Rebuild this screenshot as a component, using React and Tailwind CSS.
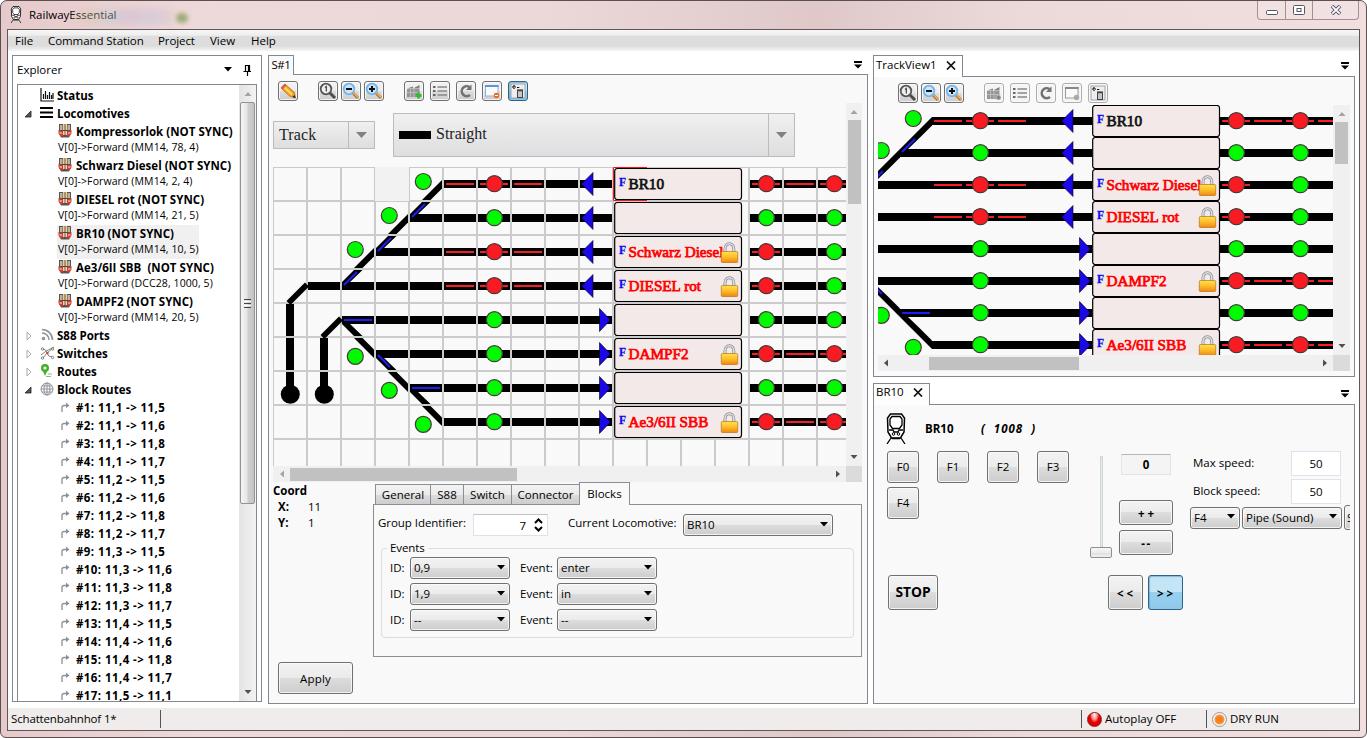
import React from "react";

const BTN =
  "flex shrink-0 items-center justify-center rounded-[3px] border border-[#707070] bg-[linear-gradient(#f3f3f3,#ebebeb_50%,#dddddd_50%,#cdcdcd)] shadow-[inset_0_0_0_1px_#fbfbfbcc]";
const BTN_OFF =
  "flex shrink-0 items-center justify-center rounded-[3px] border border-[#adadad] bg-[#f4f4f4] shadow-[inset_0_0_0_1px_#fbfbfbcc]";
const BTN_ON =
  "flex shrink-0 items-center justify-center rounded-[3px] border border-[#2c628b] bg-[linear-gradient(#c4e5f6,#c4e5f6_50%,#98d1ef_50%,#8fc8ea)] shadow-[inset_1px_1px_1px_#5b8fb088]";

/* ---------- track diagram ---------- */

const LEFT = [
  { 4: "curveUp", 5: "r", 6: "R", 7: "r", 8: "s", 9: "tl" },
  { 3: "curveUp", 4: "swUp", 5: "s", 6: "G", 7: "s", 8: "s", 9: "tl" },
  { 2: "curveUp", 3: "swUp", 4: "s", 5: "r", 6: "R", 7: "r", 8: "s", 9: "tl" },
  { 0: "bend", 1: "s", 2: "swUp", 3: "s", 4: "s", 5: "r", 6: "R", 7: "r", 8: "s", 9: "tl" },
  { 0: "v", 1: "bend", 2: "swDownS", 3: "s", 4: "s", 5: "s", 6: "G", 7: "s", 8: "s", 9: "tr" },
  { 0: "v", 1: "v", 2: "curveDown", 3: "swDownD", 4: "s", 5: "s", 6: "G", 7: "s", 8: "s", 9: "tr" },
  { 0: "end", 1: "end", 3: "curveDown", 4: "swDownS", 5: "s", 6: "G", 7: "s", 8: "s", 9: "tr" },
  { 4: "curveDown", 5: "s", 6: "G", 7: "s", 8: "s", 9: "tr" },
];
const RIGHT = [
  ["R", "r", "R", "r"],
  ["G", "s", "G", "s"],
  ["R", "s", "G", "s"],
  ["R", "s", "G", "s"],
  ["G", "s", "G", "s"],
  ["R", "r", "R", "r"],
  ["G", "s", "G", "s"],
  ["R", "r", "R", "r"],
];
const BLOCKS = [
  { name: "BR10" },
  {},
  { name: "Schwarz Diesel", locked: true },
  { name: "DIESEL rot", locked: true },
  {},
  { name: "DAMPF2", locked: true },
  {},
  { name: "Ae3/6II SBB", locked: true },
];

const Bar = () => <rect x="0" y="12" width="32" height="8" fill="#000" />;
const RedLine = () => <rect x="2" y="15" width="28" height="2" fill="#f81c24" />;
const Lamp = ({ x = 16.4, y = 15.7, color }) => (
  <circle cx={x} cy={y} r="8" fill={color} stroke="#463838" strokeWidth="1.2" />
);
const Diag = ({ d, w = 6.4 }) => <path d={d} stroke="#000" strokeWidth={w} fill="none" />;
const Blue = ({ d }) => <path d={d} stroke="#1d1dfa" strokeWidth="2" fill="none" />;

function Cell({ kind }) {
  switch (kind) {
    case "s":
      return <Bar />;
    case "r":
      return <><Bar /><RedLine /></>;
    case "R":
      return <><Bar /><RedLine /><Lamp color="#fa1a22" /></>;
    case "G":
      return <><Bar /><Lamp color="#00fa00" /></>;
    case "tl":
      return <><Bar /><path d="M1.5 16 13 4.5V27.5Z" fill="#1a08e6" stroke="#000" strokeWidth=".6" /></>;
    case "tr":
      return <><Bar /><path d="M30.5 16 19.5 4.5V27.5Z" fill="#1a08e6" stroke="#000" strokeWidth=".6" /></>;
    case "curveUp":
      return <><path d="M32 12V20.500L20.500 32H12Z" /><Lamp x={13.3} y={13.5} color="#00fa00" /></>;
    case "curveDown":
      return <><path d="M32 20V11.500L20.500 0H12Z" /><Lamp x={13.3} y={18.3} color="#00fa00" /></>;
    case "swUp":
      return <><path d="M3 12H32V20H0V12L12 0H20.500L8 12Z" /><Blue d="M2 15 15 2" /></>;
    case "swDownS":
      return <><Bar /><path d="M0 12V20L12 32H20.500L7 19Z" /><Blue d="M2 16H30" /></>;
    case "swDownD":
      return <><Bar /><path d="M0 12V20L12 32H20.500L7 19Z" /><Blue d="M2 17 14 29" /></>;
    case "bend":
      return <Diag d="M33 14.5 14.5 33" w={5.6} />;
    case "v":
      return <rect x="12" width="8" height="32" />;
    case "end":
      return <><rect x="12" width="8" height="22" /><circle cx="16.3" cy="22.3" r="9.5" /></>;
    default:
      return null;
  }
}

function Lock() {
  return (
    <g transform="translate(106.5 6)">
      <path d="M4.5 11V7a4.4 5.2 0 0 1 8.8 0V11" fill="none" stroke="#8b8f96" strokeWidth="3" />
      <path d="M4.5 11V7a4.4 5.2 0 0 1 8.8 0V11" fill="none" stroke="#dfe1e6" strokeWidth="1.5" />
      <rect x=".8" y="9.5" width="16.4" height="11" rx="1" fill="url(#lockGold)" stroke="#b4731a" strokeWidth=".7" />
    </g>
  );
}

function Block({ name, locked }) {
  return (
    <g>
      <rect x=".7" y=".5" width="126.8" height="31" rx="2.5" fill="#f3e9e8" stroke="#000" strokeWidth="1.2" />
      {name && (
        <>
          <text x="5" y="17.5" fontFamily="Liberation Serif, serif" fontWeight="700" fontSize="11.5" fill="#0a0af0" stroke="#0a0af0" strokeWidth=".3">F</text>
          <text
            x="14.6"
            y="20.8"
            fontFamily="Liberation Serif, serif"
            fontSize="15.2"
            fill={locked ? "#f00" : "#111"}
            stroke={locked ? "#f00" : "#111"}
            strokeWidth=".75"
          >
            {name}
          </text>
        </>
      )}
      {locked && <Lock />}
    </g>
  );
}

function Tracks({ width, height, pitch, ox, oy, grid }) {
  const pad = (pitch - 32) / 2;
  const at = (c, r) => `translate(${ox + c * pitch + pad} ${oy + r * pitch + pad})`;
  return (
    <svg width={width} height={height} className="block shrink-0">
      <defs>
        <linearGradient id="lockGold" x1="0" y1="0" x2="0" y2="1">
          <stop offset="0" stopColor="#ffe04a" />
          <stop offset=".45" stopColor="#ffc22e" />
          <stop offset="1" stopColor="#f0860c" />
        </linearGradient>
      </defs>
      {grid && (
        <g stroke="#cbcbcb" strokeWidth="2">
          {Array.from({ length: 17 }, (_, i) => (
            <path key={"v" + i} d={`M${i * pitch} 0V${height}`} />
          ))}
          {Array.from({ length: 9 }, (_, i) => (
            <path key={"h" + i} d={`M0 ${i * pitch}H${width}`} />
          ))}
          <rect x={3 * pitch} y="0" width={pitch} height={pitch} fill="#f2f2f2" stroke="none" />
        </g>
      )}
      {LEFT.map((row, r) =>
        Object.entries(row).map(([c, kind]) => (
          <g key={r + "-" + c} transform={at(Number(c), r)}>
            <Cell kind={kind} />
          </g>
        ))
      )}
      {RIGHT.map((row, r) =>
        row.map((kind, i) => (
          <g key={r + "+" + i} transform={at(14 + i, r)}>
            <Cell kind={kind} />
          </g>
        ))
      )}
      {BLOCKS.map((b, r) => (
        <g key={r} transform={at(10, r)}>
          <Block {...b} />
        </g>
      ))}
      {grid && <path d={`M${11 * pitch} .5H${10 * pitch + 0.5}V${pitch - 0.5}H${11 * pitch}`} fill="none" stroke="#f01818" />}
    </svg>
  );
}

/* ---------- icons ---------- */

const Pencil = () => (
  <svg width="18" height="18" viewBox="0 0 18 18">
    <path d="M2 6 6 2l9 8 1.500 6-6-2Z" fill="#f6a21c" stroke="#a86208" strokeWidth=".7" />
    <path d="M4 4 13 12.500" stroke="#ffdf6a" strokeWidth="1.800" />
    <path d="M1.800 5.600 5.600 1.800 7.400 3.500 3.600 7.400Z" fill="#e4574a" />
    <path d="M13.500 15 16.500 16 15.600 13Z" fill="#222" />
  </svg>
);
const Lens = ({ mode }) => (
  <svg width="18" height="18" viewBox="0 0 18 18">
    <path d="M10.500 10.500 16 16" stroke={mode === "1" ? "#4c4c4c" : "#b57428"} strokeWidth="3" />
    {mode !== "1" && <path d="M11 10.300 16 15.300" stroke="#f3bd62" strokeWidth="1.200" />}
    <circle cx="7" cy="7" r="5.300" fill={mode === "1" ? "#eee" : "#cbe6fb"} stroke={mode === "1" ? "#555" : "#77b3e6"} strokeWidth="1.800" />
    {mode === "1" && <path d="M6 5.500 7.300 4.500V9.500" stroke="#444" strokeWidth="1.200" fill="none" />}
    {mode !== "1" && <path d="M4 7H10" stroke="#111" strokeWidth="2" />}
    {mode === "+" && <path d="M7 4V10" stroke="#111" strokeWidth="2" />}
  </svg>
);
const Clapper = ({ off }) => (
  <svg width="18" height="18" viewBox="0 0 18 18">
    <path d="M2 7H14.500V15H2Z" fill="#969696" />
    <path d="M2 6.500 8 4.500V6.500L14.500 3V6.500H2Z" fill="#808080" />
    <path d="M5.500 7V15M9 7V15M2 10.500H13" stroke="#c4c4c4" strokeWidth=".8" />
    {off ? <circle cx="13.500" cy="13.500" r="2.500" fill="#888" stroke="#ddd" strokeWidth=".6" /> : <path d="M10.500 13.500H16.500M13.500 10.500V16.500" stroke="#3ab83c" strokeWidth="2.800" />}
  </svg>
);
const ListIcon = () => (
  <svg width="18" height="18" viewBox="0 0 18 18">
    <path d="M2 5H4.500M2 9H4.500M2 13H4.500" stroke="#666" strokeWidth="2.200" />
    <path d="M6.500 5H16M6.500 9H16M6.500 13H16" stroke="#888" strokeWidth="1.700" />
  </svg>
);
const Reload = () => (
  <svg width="18" height="18" viewBox="0 0 18 18">
    <path d="M13 13A5 5 0 1 1 12.500 5" fill="none" stroke="#737373" strokeWidth="2.600" />
    <path d="M9 8H14.500V2.500Z" fill="#737373" />
  </svg>
);
const Win = ({ off }) => (
  <svg width="18" height="18" viewBox="0 0 18 18">
    <rect x="2.500" y="3.500" width="12.500" height="10.500" fill="#fafafa" stroke={off ? "#999" : "#8eb0e0"} />
    <path d="M2 4H15.500" stroke={off ? "#888" : "#5c93da"} strokeWidth="2" />
    <circle cx="13.500" cy="13.500" r="2.700" fill={off ? "#aaa" : "#f06a1c"} />
    {!off && <path d="M12 13.500H15" stroke="#fff" />}
  </svg>
);
const Sticky = () => (
  <svg width="18" height="18" viewBox="0 0 18 18">
    <rect x="2" y="2" width="14" height="14" fill="#eee" stroke="#888" strokeWidth=".7" />
    <path d="M3 5H7M5 3V7M8 5.500H11" stroke="#111" strokeDasharray="2 .7" strokeWidth="1.200" />
    <rect x="8.500" y="8" width="5" height="7.500" fill="#c6c6c6" stroke="#444" />
    <path d="M8 8.500H14" stroke="#444" strokeWidth="1.500" />
  </svg>
);
const Train = ({ w, h }) => (
  <svg width={w} height={h} viewBox="0 0 20 31" fill="none" stroke="#000">
    <path d="M4.500 1H15.500L18.500 5 18 19 14.500 25H5.500L2 19 1.500 5Z" strokeWidth="1.500" fill="#fff" />
    <path d="M6 3.500H14L16 6V12L13.500 15.500H6.500L4 12V6Z" strokeWidth="1.300" />
    <path d="M3 17H7L8 19H12L13 17H17M5 25 1 31M15 25 19 31M6 25.500H14" strokeWidth="1.300" />
    <circle cx="7.500" cy="21" r="1.300" />
    <circle cx="12.500" cy="21" r="1.300" />
  </svg>
);
const LocoIcon = () => (
  <svg width="14" height="14" viewBox="0 0 14 14" className="block shrink-0">
    <path d="M1 0H13V10L11 13.500H3L1 10Z" fill="#5a5452" />
    <path d="M2 1H4.500V6H2ZM9.500 1H12V6H9.500Z" fill="#b9b1a6" />
    <path d="M5 0H9V6H5Z" fill="#eecb8e" />
    <path d="M.500 6 5 8V12L2.500 12 .500 9.500ZM13.500 6 9 8V12L11.500 12 13.500 9.500Z" fill="#dc3a2c" />
    <path d="M5 7H9V11H5Z" fill="#f0d8b4" />
    <path d="M7 0V12M5 6.500H9" stroke="#5b3b2c" strokeWidth=".8" />
    <path d="M1.500 9H4M10 9H12.500" stroke="#ffe9e0" strokeWidth="1" />
  </svg>
);
const Turn = () => (
  <svg width="11" height="12" viewBox="0 0 11 12" className="shrink-0" fill="none" stroke="#8b9099" strokeWidth="1.300">
    <path d="M2 11V6.500Q2 4.500 4 4.500H8" />
    <path d="M6 1.500 9.500 4.500 6 7Z" fill="#8b9099" stroke="none" />
  </svg>
);
const GroupIcons = {
  status: (
    <svg width="14" height="14" viewBox="0 0 14 14"><path d="M1 0V13H14M3.500 6V11M5.500 3V11M7.500 7V11M9.500 4V11M11.500 7V11M13 5V11" stroke="#111" strokeWidth="1.200" fill="none" /></svg>
  ),
  list: (
    <svg width="14" height="14" viewBox="0 0 14 14"><path d="M0 2H13M0 6.500H13M0 11H13" stroke="#000" strokeWidth="2" /></svg>
  ),
  feed: (
    <svg width="14" height="14" viewBox="0 0 14 14" fill="none" stroke="#8e929b" strokeWidth="1.600"><path d="M2 1.500A10.500 10.500 0 0 1 12.500 12M2 5A7 7 0 0 1 9 12" /><circle cx="3.500" cy="10.500" r="1" /></svg>
  ),
  net: (
    <svg width="15" height="14" viewBox="0 0 15 14" fill="none" stroke="#777" strokeWidth=".9"><path d="M3 12 7 7 12 3M3 3Q6 3 7 7T12 11M1 9Q5 5 14 1" /><circle cx="2.500" cy="3" r="1.200" /><circle cx="12.500" cy="3" r="1.200" /><circle cx="12.500" cy="11.500" r="1.200" /><circle cx="2.500" cy="12" r="1.200" /><circle cx="7.500" cy="7" r="1.200" fill="#c44" stroke="none" /></svg>
  ),
  pin: (
    <svg width="14" height="14" viewBox="0 0 14 14"><circle cx="5" cy="4" r="2.800" fill="none" stroke="#43b02a" strokeWidth="2.400" /><path d="M2.500 6 5 12 7.500 6Z" fill="#43b02a" /><path d="M6 12.500H11M8 10H12" stroke="#8fb98a" strokeWidth="1.200" /></svg>
  ),
  globe: (
    <svg width="14" height="14" viewBox="0 0 14 14" fill="none" stroke="#8e929b" strokeWidth="1"><circle cx="7" cy="7" r="6" /><ellipse cx="7" cy="7" rx="3" ry="6" /><path d="M1 7H13M7 1V13M2 4H12M2 10H12" /></svg>
  ),
};

/* ---------- small controls ---------- */

const ToolBtn = ({ children, on, off, ml }) => (
  <span className={(on ? BTN_ON : off ? BTN_OFF : BTN) + " h-5 w-5 " + (ml || "")}>{children}</span>
);

const Caret = () => (
  <svg width="8" height="5" className="shrink-0"><path d="M0 0H8L4 4.500Z" fill="#000" /></svg>
);

const Select = ({ children, className }) => (
  <div className={BTN + " justify-between! pr-1 pl-[3px] " + className}>
    <span className="whitespace-nowrap">{children}</span>
    <span className="-mt-[2px] flex"><Caret /></span>
  </div>
);

const MenuMark = () => (
  <svg width="9" height="9" className="shrink-0"><path d="M0 2H8" stroke="#000" strokeWidth="2" /><path d="M0 4.500H8L4 8.500Z" /></svg>
);
const Cross = () => (
  <svg width="10" height="9" className="shrink-0"><path d="M1 .5 9 8.500M9 .5 1 8.500" stroke="#111" strokeWidth="1.700" /></svg>
);

const Arrow = ({ d, light }) => (
  <svg width="8" height="8" className="shrink-0"><path d={d} fill={light ? "#a3a3a3" : "#505050"} /></svg>
);
const UP = "M.5 6 4 2 7.500 6Z";
const DOWN = "M.5 2 4 6 7.500 2Z";
const LEFTA = "M6 .5 2 4 6 7.500Z";
const RIGHTA = "M2 .5 6 4 2 7.500Z";

/* ---------- explorer ---------- */

const LOCOS = [
  ["Kompressorlok (NOT SYNC)", "V[0]->Forward (MM14, 78, 4)"],
  ["Schwarz Diesel (NOT SYNC)", "V[0]->Forward (MM14, 2, 4)"],
  ["DIESEL rot (NOT SYNC)", "V[0]->Forward (MM14, 21, 5)"],
  ["BR10 (NOT SYNC)", "V[0]->Forward (MM14, 10, 5)"],
  ["Ae3/6II SBB  (NOT SYNC)", "V[0]->Forward (DCC28, 1000, 5)"],
  ["DAMPF2 (NOT SYNC)", "V[0]->Forward (MM14, 20, 5)"],
];
const ROUTES = [
  "11,1 -> 11,5", "11,1 -> 11,6", "11,1 -> 11,8", "11,1 -> 11,7", "11,2 -> 11,5", "11,2 -> 11,6",
  "11,2 -> 11,8", "11,2 -> 11,7", "11,3 -> 11,5", "11,3 -> 11,6", "11,3 -> 11,8", "11,3 -> 11,7",
  "11,4 -> 11,5", "11,4 -> 11,6", "11,4 -> 11,8", "11,4 -> 11,7", "11,5 -> 11,1",
];

const Group = ({ icon, label, state }) => (
  <div className="flex h-[18px] items-center pl-[6px] font-bold">
    <span className="flex w-[16px] shrink-0">
      {state === "open" && <svg width="8" height="8"><path d="M7 1V7H1Z" fill="#555" stroke="#222" strokeWidth=".8" /></svg>}
      {state === "closed" && <svg width="8" height="10" className="ml-px"><path d="M2 1 6 5 2 9Z" fill="#fff" stroke="#aaa" /></svg>}
    </span>
    <span className="flex w-[17px] shrink-0 pb-[2px]">{GroupIcons[icon]}</span>
    {label}
  </div>
);

function Explorer() {
  return (
    <section className="flex w-[250px] shrink-0 flex-col border border-[#828790] bg-white">
      <header className="flex h-7 shrink-0 items-center pr-[10px] pb-px pl-1">
        <span className="flex-1">Explorer</span>
        <Caret />
        <svg width="8" height="12" className="ml-[11px]"><path d="M2.500 7V1.500H6.500V7M.5 7.500H8M4.500 7.500V12M5.500 1V7" stroke="#000" strokeWidth="1.200" fill="none" /></svg>
      </header>
      <div className="mx-1 flex min-h-0 flex-1 border border-b-0 border-[#828790]">
        <div className="min-w-0 flex-1 overflow-hidden pt-[2px]">
          <Group icon="status" label="Status" />
          <Group icon="list" label="Locomotives" state="open" />
          {LOCOS.map(([name, sub], i) => (
            <div key={name} className="flex h-[34px] pl-[39px]">
              <div className={i === 3 ? "bg-[#f0f0f0] pl-px" : "pl-px"}>
                <div className="flex h-[18px] items-center font-bold tracking-[0.03px] whitespace-pre">
                  <span className="w-[18px] shrink-0 pb-[3px]"><LocoIcon /></span>
                  {name}
                </div>
                <div className="h-4 text-[10.5px] leading-[12px] tracking-[0.1px] whitespace-nowrap">{sub}</div>
              </div>
            </div>
          ))}
          <Group icon="feed" label="S88 Ports" state="closed" />
          <Group icon="net" label="Switches" state="closed" />
          <Group icon="pin" label="Routes" state="closed" />
          <Group icon="globe" label="Block Routes" state="open" />
          {ROUTES.map((r, i) => (
            <div key={i} className="flex h-[18px] items-center pl-[42px] font-bold tracking-[0.42px] whitespace-nowrap">
              <span className="w-4 shrink-0 pb-[2px]"><Turn /></span>
              {`#${i + 1}: ${r}`}
            </div>
          ))}
        </div>
        <div className="flex w-[17px] shrink-0 flex-col items-center bg-[linear-gradient(90deg,#e3e3e3,#f3f3f3)]">
          <div className="flex h-[17px] items-center"><Arrow d={UP} light /></div>
          <div className="flex h-[402px] w-[15px] flex-col items-center justify-center gap-px rounded-[2px] border border-[#929292] bg-[linear-gradient(90deg,#f4f4f4,#e6e6e6_45%,#cfcfd0_55%,#c4c4c6)]">
            <i className="h-px w-[7px] bg-[#444]" />
            <i className="h-px w-[7px] bg-white" />
            <i className="h-px w-[7px] bg-[#444]" />
            <i className="h-px w-[7px] bg-white" />
            <i className="h-px w-[7px] bg-[#444]" />
          </div>
          <div className="flex flex-1 items-end pb-[5px]"><Arrow d={DOWN} /></div>
        </div>
      </div>
    </section>
  );
}

/* ---------- editor ---------- */

const TabLabel = ({ children, className }) => (
  <div className={"flex items-center justify-center border border-b-0 border-[#8c8e94] bg-[linear-gradient(#f3f3f3,#ebebeb_50%,#dddddd_50%,#cdcdcd)] " + className}>
    {children}
  </div>
);

const EventRow = ({ id, event }) => (
  <div className="flex h-[26px] items-center">
    <span className="w-5">ID:</span>
    <Select className="h-[22px] w-[100px]">{id}</Select>
    <span className="ml-[10px] w-[37px]">Event:</span>
    <Select className="h-[22px] w-[100px]">{event}</Select>
  </div>
);

const BigCaret = () => (
  <svg width="11" height="6"><path d="M0 0H11L5.500 6Z" fill="#808080" /></svg>
);

function Editor() {
  return (
    <section className="flex w-[600px] shrink-0 flex-col">
      <header className="flex h-[19px] shrink-0 items-center">
        <div className="z-10 flex h-5 w-[26px] items-center justify-center self-start border border-b-0 border-[#828790] bg-[#f9f9f9] pb-[2px] tracking-[-0.4px]">S#1</div>
        <span className="flex-1" />
        <span className="mr-[5px]"><MenuMark /></span>
      </header>
      <div className="flex min-h-0 flex-1 flex-col border border-[#828790] bg-[#f9f9f9] pl-1">
        <div className="flex h-[28px] shrink-0 items-start pt-[6px] pl-[5px]">
          <ToolBtn><Pencil /></ToolBtn>
          <ToolBtn ml="ml-5"><Lens mode="1" /></ToolBtn>
          <ToolBtn ml="ml-[3px]"><Lens mode="-" /></ToolBtn>
          <ToolBtn ml="ml-[3px]"><Lens mode="+" /></ToolBtn>
          <ToolBtn ml="ml-5"><Clapper /></ToolBtn>
          <ToolBtn ml="ml-[6px]"><ListIcon /></ToolBtn>
          <ToolBtn ml="ml-[6px]"><Reload /></ToolBtn>
          <ToolBtn ml="ml-[6px]"><Win /></ToolBtn>
          <ToolBtn ml="ml-[6px]" on><Sticky /></ToolBtn>
        </div>
        <div className="flex h-[363px] shrink-0">
          <div className="w-[573px]">
            <div className="flex h-16 items-start pt-[10px] font-['Liberation_Serif',serif] text-[16px] text-[#222]">
              <div className="mt-2 flex h-7 w-[102px] border border-[#bcbcbc] bg-[linear-gradient(#f0f0f0,#dedee0)]">
                <span className="flex flex-1 items-center pl-[5px] tracking-[0.1px]">Track</span>
                <span className="flex w-[26px] items-center justify-center border-l border-[#bcbcbc]"><BigCaret /></span>
              </div>
              <div className="ml-[18px] flex h-11 w-[402px] border border-[#bcbcbc] bg-[linear-gradient(#f0f0f0,#dedee0)]">
                <span className="flex flex-1 items-center gap-[5px] pb-[2px] pl-[5px]">
                  <i className="mt-[2px] h-2 w-8 bg-black" />
                  Straight
                </span>
                <span className="flex w-[26px] items-center justify-center border-l border-[#bcbcbc]"><BigCaret /></span>
              </div>
            </div>
            <Tracks width={573} height={299} pitch={34} ox={0} oy={0} grid />
          </div>
          <div className="flex w-4 flex-col items-center bg-[#f0f0f0]">
            <span className="flex h-[17px] items-center"><Arrow d={UP} light /></span>
            <i className="h-[84px] w-[13px] bg-[#c1c1c1]" />
            <span className="flex flex-1 items-end pb-[5px]"><Arrow d={DOWN} /></span>
          </div>
        </div>
        <div className="flex h-4 w-[589px] shrink-0 items-center bg-[#f0f0f0]">
          <span className="flex w-[17px] justify-center"><Arrow d={LEFTA} light /></span>
          <i className="h-[13px] w-[227px] bg-[#c1c1c1]" />
          <span className="flex flex-1 justify-end pr-1"><Arrow d={RIGHTA} /></span>
          <i className="h-4 w-4 bg-[#dbdbdb]" />
        </div>
        <div className="flex">
          <div className="flex w-[100px] flex-col">
            <div className="mt-[1px] flex h-4 items-center font-bold">Coord</div>
            <div className="flex h-4 items-center pl-[5px]"><b className="w-[30px]">X:</b>11</div>
            <div className="flex h-4 items-center pl-[5px]"><b className="w-[30px]">Y:</b>1</div>
            <div className={BTN + " mt-[131px] ml-[5px] h-8 w-[75px] pt-px tracking-[0.15px]"}>Apply</div>
          </div>
          <div className="flex w-[489px] flex-col">
            <div className="flex h-[22px] items-end pl-[2px]">
              <TabLabel className="h-5 w-[56px]">General</TabLabel>
              <TabLabel className="-ml-px h-5 w-[34px]">S88</TabLabel>
              <TabLabel className="-ml-px h-5 w-[49px]">Switch</TabLabel>
              <TabLabel className="-ml-px h-5 w-[69px]">Connector</TabLabel>
              <div className="z-10 -mb-px -ml-px flex h-[23px] w-[51px] items-center justify-center border border-b-0 border-[#8c8e94] bg-[#f9f9f9]">Blocks</div>
            </div>
            <div className="h-[153px] border border-[#8c8e94] pt-[9px] pl-1">
              <div className="flex h-[22px] items-center">
                <span className="w-[95px] pb-[5px] tracking-[-0.05px] whitespace-nowrap">Group Identifier:</span>
                <div className="flex h-[22px] w-[75px] items-center justify-end border border-[#dfe1e6] border-t-[#c0c4cc] bg-white">
                  <span className="mt-[2px] mr-2">7</span>
                  <svg width="9" height="14" className="mr-1"><path d="M1 5 4.500 1.500 8 5M1 9 4.500 12.500 8 9" fill="none" stroke="#000" strokeWidth="2" /></svg>
                </div>
                <span className="ml-5 w-[115px] pb-[5px] tracking-[-0.05px] whitespace-nowrap">Current Locomotive:</span>
                <Select className="h-[22px] w-[150px]">BR10</Select>
              </div>
              <fieldset className="mt-1 ml-[3px] h-[98px] w-[473px] rounded-[4px] border border-[#d5dfe5] pl-2 [&>legend]:-ml-[3px]">
                <legend className="h-4 px-[3px] leading-4 tracking-[-0.1px]">Events</legend>
                <div className="-mt-px">
                  <EventRow id="0,9" event="enter" />
                  <EventRow id="1,9" event="in" />
                  <EventRow id="--" event="--" />
                </div>
              </fieldset>
            </div>
          </div>
        </div>
      </div>
    </section>
  );
}

/* ---------- right column ---------- */

function TrackView() {
  return (
    <section className="flex h-[322px] shrink-0 flex-col">
      <header className="flex h-[21px] shrink-0 items-center">
        <div className="z-10 flex h-[22px] w-[90px] items-center justify-between self-start border border-b-0 border-[#828790] bg-white pr-[6px] pb-[3px] pl-[2px]">
          TrackView1 <Cross />
        </div>
        <span className="flex-1" />
        <span className="mr-[5px]"><MenuMark /></span>
      </header>
      <div className="min-h-0 flex-1 border border-[#828790] bg-[#f9f9f9] pl-1">
        <div className="flex h-[28px] items-start pt-[6px] pl-5">
          <ToolBtn><Lens mode="1" /></ToolBtn>
          <ToolBtn ml="ml-[3px]"><Lens mode="-" /></ToolBtn>
          <ToolBtn ml="ml-[3px]"><Lens mode="+" /></ToolBtn>
          <ToolBtn ml="ml-5" off><Clapper off /></ToolBtn>
          <ToolBtn ml="ml-[6px]" off><ListIcon /></ToolBtn>
          <ToolBtn ml="ml-[6px]" off><Reload /></ToolBtn>
          <ToolBtn ml="ml-[6px]" off><Win off /></ToolBtn>
          <ToolBtn ml="ml-[6px]" off><Sticky /></ToolBtn>
        </div>
        <div className="flex h-[250px]">
          <Tracks width={455} height={250} pitch={32} ox={-106} oy={0} />
          <div className="flex w-[17px] flex-col items-center bg-[#f0f0f0]">
            <span className="flex h-[17px] items-center"><Arrow d={UP} light /></span>
            <i className="h-[42px] w-[13px] bg-[#c1c1c1]" />
            <span className="flex flex-1 items-end pb-[5px]"><Arrow d={DOWN} /></span>
          </div>
        </div>
        <div className="flex h-4 w-[472px] items-center bg-[#f0f0f0]">
          <span className="flex w-[51px] pl-1"><Arrow d={LEFTA} /></span>
          <i className="h-[13px] w-[150px] bg-[#c1c1c1]" />
          <span className="flex flex-1 justify-end pr-1"><Arrow d={RIGHTA} /></span>
          <i className="h-4 w-[17px] bg-[#dbdbdb]" />
        </div>
      </div>
    </section>
  );
}

const SpeedRow = ({ label }) => (
  <div className="flex h-7 items-start justify-between pl-[3px]">
    <span className="pt-[3px]">{label}</span>
    <span className="flex h-[25px] w-[50px] items-center justify-center border border-[#e2e3ea] bg-white">50</span>
  </div>
);

function LocoControl() {
  return (
    <section className="mt-[6px] flex min-h-0 flex-1 flex-col">
      <header className="flex h-[21px] shrink-0 items-center">
        <div className="z-10 flex h-[22px] w-[57px] items-center justify-between self-start border border-b-0 border-[#828790] bg-[#fdfdfd] pr-[6px] pb-[5px] pl-[2px]">
          BR10 <Cross />
        </div>
        <span className="flex-1" />
        <span className="mr-[5px]"><MenuMark /></span>
      </header>
      <div className="flex min-h-0 flex-1 flex-col overflow-hidden border border-[#828790] bg-[#f9f9f9] pl-[13px]">
        <div className="flex h-[46px] shrink-0 items-start pt-2">
          <div className="-ml-px"><Train w={20} h={31} /></div>
          <b className="mt-[7px] ml-[19px] w-14">BR10</b>
          <b className="mt-[7px] tracking-[1px] whitespace-pre italic">(  1008  )</b>
        </div>
        <div className="flex h-[124px] shrink-0">
          <div className="flex w-[203px] flex-wrap content-start gap-x-[18px] gap-y-1">
            {["F0", "F1", "F2", "F3", "F4"].map((f) => (
              <div key={f} className={BTN + " h-8 w-8"}>{f}</div>
            ))}
          </div>
          <div className="flex w-[22px] flex-col items-center pt-[5px]">
            <i className="h-[91px] w-[3px] border border-[#d0d6d6] bg-[#e7eaea]" />
            <i className="h-[11px] w-[22px] rounded-[2px] border border-[#8e8f8f] bg-[linear-gradient(#f6f6f6,#ececec_50%,#dddddd_50%,#f0f0f0)]" />
          </div>
          <div className="ml-[7px] flex w-[54px] flex-col items-center pt-[3px]">
            <div className="flex h-[21px] w-[50px] items-center justify-center border border-[#e2e3ea] border-t-[#b5b5be] bg-[#f4f4f4] font-bold">0</div>
            <div className={BTN + " mt-[25px] h-[25px] w-[54px] pt-[2px] pl-[3px] font-bold tracking-[3px]"}>++</div>
            <div className={BTN + " mt-[5px] h-[25px] w-[54px] pt-[2px] pl-px font-bold tracking-[1.5px]"}>--</div>
          </div>
          <div className="ml-[17px] w-[160px] overflow-hidden">
            <div className="w-[151px]">
              <SpeedRow label="Max speed:" />
              <SpeedRow label="Block speed:" />
            </div>
            <div className="-mt-[2px] flex w-[170px] items-center gap-[2px]">
              <Select className="h-[22px] w-[50px]">F4</Select>
              <Select className="h-[22px] w-[100px]">Pipe (Sound)</Select>
              <div className={BTN + " h-[25px] w-[40px] justify-start! pl-[2px]"}>S</div>
            </div>
          </div>
        </div>
        <div className="flex h-[35px] shrink-0 pl-px">
          <div className={BTN + " h-[35px] w-[50px] text-[13.8px] font-bold"}>STOP</div>
          <div className={BTN + " ml-[170px] h-[35px] w-[35px] pt-[3px] pl-[2px] font-bold tracking-[3px]"}>&lt;&lt;</div>
          <div className={BTN_ON + " ml-[5px] h-[35px] w-[35px] pt-[3px] pl-[2px] font-bold tracking-[3px]"}>&gt;&gt;</div>
        </div>
      </div>
    </section>
  );
}

/* ---------- window ---------- */

export default function App() {
  return (
    <div className="flex h-[738px] w-[1367px] flex-col overflow-hidden rounded-t-[7px] rounded-b-[6px] border border-[#5a5052] bg-[linear-gradient(90deg,#e6c9cb,#eed9da_15%,#ecd8d9_40%,#e0c8c9_60%,#ecdadb_75%,#f1dfe0)] px-[6px] pb-[6px] font-['Open_Sans','Noto_Sans',sans-serif] text-[11.5px] text-black">
      <div className="flex h-7 shrink-0 items-start pl-[3px]">
        <div className="mt-[5px]"><Train w={12} h={17} /></div>
        <span className="mt-[5px] ml-[7px]">RailwayEssential</span>
        <span className="mt-2 -ml-[50px] h-4 w-[105px] bg-[linear-gradient(90deg,#c7b3ce00,#d9c8a8,#b7cbd8,#c7b3ce,#b9c2de,#d8c0c4)] opacity-40 blur-[3px]" />
        <span className="mt-3 ml-1 h-[10px] w-3 rounded-full bg-[#7f9a50] opacity-70 blur-[2px]" />
        <div className="mr-px ml-auto flex h-[19px] w-[102px] rounded-b-[4px] border border-t-0 border-[#a58f92] bg-[#f2e2e3aa]">
          <span className="flex w-7 items-center justify-center border-r border-[#a58f92]">
            <svg width="12" height="5" className="mt-[5px]"><rect x=".5" y=".5" width="11" height="4" rx="1" fill="#fff" stroke="#556" /></svg>
          </span>
          <span className="flex w-[27px] items-center justify-center border-r border-[#a58f92]">
            <svg width="12" height="10"><rect x=".5" y=".5" width="11" height="9" rx="1" fill="#fff" stroke="#556" /><rect x="4" y="3.500" width="4" height="3" fill="#fff" stroke="#556" /></svg>
          </span>
          <span className="flex flex-1 items-center justify-center">
            <svg width="12" height="10"><path d="M2 1 10 9M10 1 2 9" stroke="#556" strokeWidth="3.600" /><path d="M2.300 1.300 9.700 8.700M9.700 1.300 2.300 8.700" stroke="#fff" strokeWidth="1.800" /></svg>
          </span>
        </div>
      </div>
      <div className="flex min-h-0 flex-1 flex-col border border-[#5f5658] bg-white">
        <nav className="flex h-[21px] shrink-0 items-center bg-[linear-gradient(#f7f7f7_0%,#eeeeee_25%,#dedede_30%,#dcdcdc_75%,#f6f6f6)] pl-[7px]">
          <span className="w-[33px]">File</span>
          <span className="w-[110px] tracking-[-0.07px]">Command Station</span>
          <span className="w-[52px] tracking-[-0.1px]">Project</span>
          <span className="w-[41px]">View</span>
          <span>Help</span>
        </nav>
        <main className="flex h-[653px] shrink-0 pt-[4px] pl-1">
          <div className="flex h-[647px] w-[250px] shrink-0"><Explorer /></div>
          <div className="ml-[6px] flex"><Editor /></div>
          <div className="ml-[5px] flex w-[482px] shrink-0 flex-col">
            <TrackView />
            <LocoControl />
          </div>
        </main>
        <footer className="mt-auto flex h-[22px] shrink-0 items-center bg-[#f0eceb] pl-[3px]">
          <span className="w-[149px] tracking-[-0.15px]">Schattenbahnhof 1*</span>
          <i className="h-[18px] w-px bg-[#555]" />
          <span className="w-[920px]" />
          <i className="h-[18px] w-px bg-[#555]" />
          <i className="mr-[3px] ml-[5px] h-[15px] w-[15px] rounded-full border border-[#8d2020] bg-[radial-gradient(ellipse_at_50%_15%,#fff,#ff8a8a_30%,#e80000_50%,#d00000)]" />
          <span className="w-[101px]">Autoplay OFF</span>
          <i className="h-[18px] w-px bg-[#555]" />
          <i className="mr-[3px] ml-[5px] h-[15px] w-[15px] rounded-full border border-[#999] bg-[radial-gradient(circle,#f7801c_30%,#fb9c44_50%,#f4f4f4_58%)]" />
          <span>DRY RUN</span>
        </footer>
      </div>
    </div>
  );
}
